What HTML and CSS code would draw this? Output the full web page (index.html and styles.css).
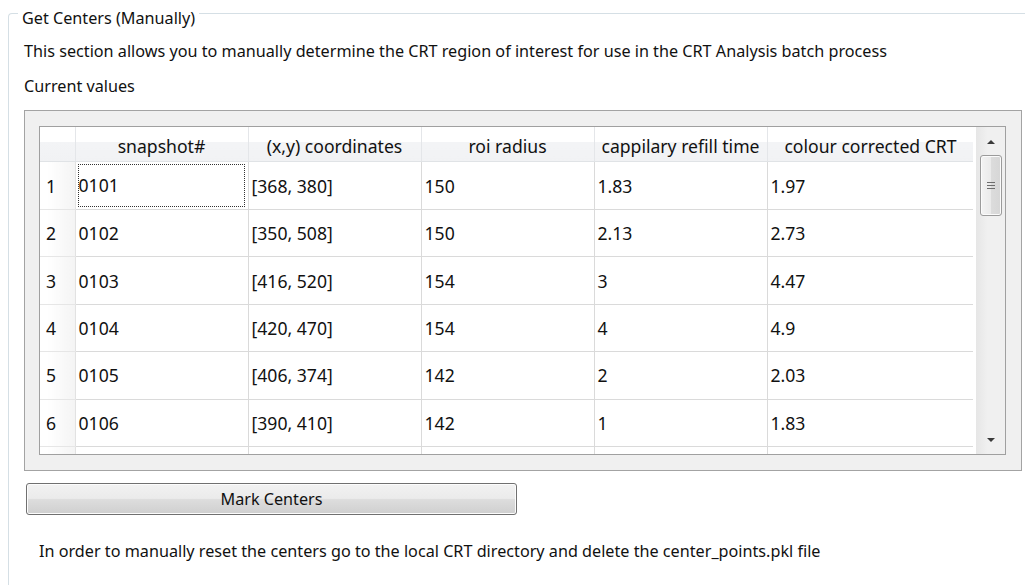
FILE: index.html
```html
<!DOCTYPE html>
<html lang="en">
<head>
<meta charset="utf-8">
<title>Get Centers (Manually)</title>
<link rel="stylesheet" href="styles.css">
</head>
<body>
<fieldset class="group">
  <legend class="group-title">Get Centers (Manually)</legend>
  <div class="group-body">
    <p class="note intro">This section allows you to manually determine the CRT region of interest for use in the CRT Analysis batch process</p>
    <p class="note current">Current values</p>

    <div class="frame">
      <div class="grid-view">
        <div class="viewport">
          <table class="values">
            <colgroup>
              <col class="c-row">
              <col class="c-std">
              <col class="c-std">
              <col class="c-std">
              <col class="c-std">
              <col class="c-last">
            </colgroup>
            <thead>
              <tr>
                <th class="corner"></th>
                <th>snapshot#</th>
                <th>(x,y) coordinates</th>
                <th>roi radius</th>
                <th>cappilary refill time</th>
                <th>colour corrected CRT</th>
              </tr>
            </thead>
            <tbody>
              <tr><th class="rownum">1</th><td class="focus"><span>0101</span></td><td>[368, 380]</td><td>150</td><td>1.83</td><td>1.97</td></tr>
              <tr><th class="rownum">2</th><td>0102</td><td>[350, 508]</td><td>150</td><td>2.13</td><td>2.73</td></tr>
              <tr><th class="rownum">3</th><td>0103</td><td>[416, 520]</td><td>154</td><td>3</td><td>4.47</td></tr>
              <tr><th class="rownum">4</th><td>0104</td><td>[420, 470]</td><td>154</td><td>4</td><td>4.9</td></tr>
              <tr><th class="rownum">5</th><td>0105</td><td>[406, 374]</td><td>142</td><td>2</td><td>2.03</td></tr>
              <tr><th class="rownum">6</th><td>0106</td><td>[390, 410]</td><td>142</td><td>1</td><td>1.83</td></tr>
              <tr class="peek"><th class="rownum"></th><td></td><td></td><td></td><td></td><td></td></tr>
            </tbody>
          </table>
        </div>
        <div class="vscroll">
          <div class="arrow up"></div>
          <div class="thumb"><span class="grip"></span></div>
          <div class="track"></div>
          <div class="arrow down"></div>
        </div>
      </div>
    </div>

    <button class="push" type="button">Mark Centers</button>

    <p class="note footer">In order to manually reset the centers go to the local CRT directory and delete the center_points.pkl file</p>
  </div>
</fieldset>
</body>
</html>
```

FILE: styles.css
```css
html, body {
  margin: 0;
  padding: 0;
  background: #ffffff;
  overflow: hidden;
}

body {
  width: 1025px;
  height: 585px;
  font-family: "Noto Sans", "DejaVu Sans", sans-serif;
  font-size: 16.2px;
  color: #111111;
}

/* group box: its right and bottom edges lie outside the window */
.group {
  margin: 0 0 0 8px;
  padding: 0;
  width: 1017px;
  height: 585px;
  box-sizing: border-box;
  border: 1px solid #d5dfe5;
  border-right: none;
  border-bottom: none;
  border-radius: 4px 0 0 0;
}

.group-title {
  margin-left: 9px;
  padding: 9px 4px 0 4px;
  line-height: 18px;
}

.group-body {
  padding-left: 15px;
}

.note {
  margin: 0;
  line-height: 18px;
}

.intro {
  margin-top: 15px;
}

.current {
  margin-top: 17px;
}

/* framed table view */
.frame {
  margin-top: 15px;
  width: 998px;
  box-sizing: border-box;
  border: 1px solid #a3a3a3;
  background: #f0f0f0;
  padding: 15px 15px 15px 14px;
}

.grid-view {
  display: flex;
  height: 327px;
  border: 1px solid #a0a0a0;
  background: #ffffff;
  overflow: hidden;
}

.viewport {
  flex: 1;
  overflow: hidden;
}

.values {
  border-collapse: collapse;
  table-layout: fixed;
  width: 934px;
  font-size: 17.6px;
}

.c-row { width: 35px; }
.c-std { width: 173px; }
.c-last { width: 207px; }

.values th,
.values td {
  padding: 0;
  font-weight: normal;
  white-space: nowrap;
  overflow: hidden;
}

.values thead th {
  height: 31px;
  padding-top: 3px;
  text-align: center;
  border-right: 1px solid #e4e6e9;
  border-bottom: 1px solid #e0e3e6;
  background: linear-gradient(#ffffff 0, #ffffff 44%, #f3f4f6 44%, #f1f2f4 100%);
}

.values tbody td {
  height: 46.4px;
  padding-left: 3px;
  border-right: 1px solid #dadada;
  border-bottom: 1px solid #dadada;
}

.values tbody th.rownum {
  height: 46.4px;
  text-align: left;
  padding-left: 6px;
  border-right: 1px solid #e2e2e2;
  border-bottom: 1px solid #e6e6e6;
  background: linear-gradient(90deg, #ffffff 0, #ffffff 20%, #f4f4f4 100%);
}

.values tbody td.focus {
  padding: 0;
}

.values tbody td.focus span {
  display: block;
  margin: 2px 3px 2px 2px;
  height: 43px;
  line-height: 41px;
  padding-left: 0;
  box-sizing: border-box;
  border: 1px dotted #333333;
}

/* vertical scroll bar */
.vscroll {
  width: 29px;
  margin-left: 3px;
  display: flex;
  flex-direction: column;
  align-items: center;
  background: linear-gradient(90deg, #e6e6e6, #f0f0f0 40%, #f0f0f0);
}

.arrow {
  width: 0;
  height: 0;
  border-left: 4px solid transparent;
  border-right: 4px solid transparent;
}

.arrow.up {
  margin-top: 13px;
  border-bottom: 4px solid #3a3a3a;
}

.arrow.down {
  margin-bottom: 12px;
  border-top: 4px solid #3a3a3a;
}

.thumb {
  margin-top: 11px;
  width: 22px;
  height: 61px;
  box-sizing: border-box;
  border: 1px solid #9b9b9b;
  border-radius: 3px;
  background: linear-gradient(90deg, #f3f3f3 0, #eaeaea 50%, #dcdcdc 51%, #d6d6d6 100%);
  box-shadow: inset 0 0 0 1px #fbfbfb;
  display: flex;
  align-items: center;
  justify-content: center;
}

.grip {
  display: block;
  width: 8px;
  height: 7px;
  background: repeating-linear-gradient(#6e6e6e 0, #6e6e6e 1px, transparent 1px, transparent 3px);
}

.track {
  flex: 1;
}

/* push button */
.push {
  display: block;
  margin: 12px 0 0 2px;
  width: 491px;
  height: 32px;
  padding: 0;
  font-family: inherit;
  font-size: 16.2px;
  color: #111111;
  border: 1px solid #707070;
  border-radius: 3px;
  background: linear-gradient(#f2f2f2 0, #ebebeb 48%, #dddddd 52%, #cfcfcf 100%);
  box-shadow: inset 0 0 0 1px #fcfcfc;
}

.footer {
  margin-top: 27px;
  padding-left: 15px;
}
```
